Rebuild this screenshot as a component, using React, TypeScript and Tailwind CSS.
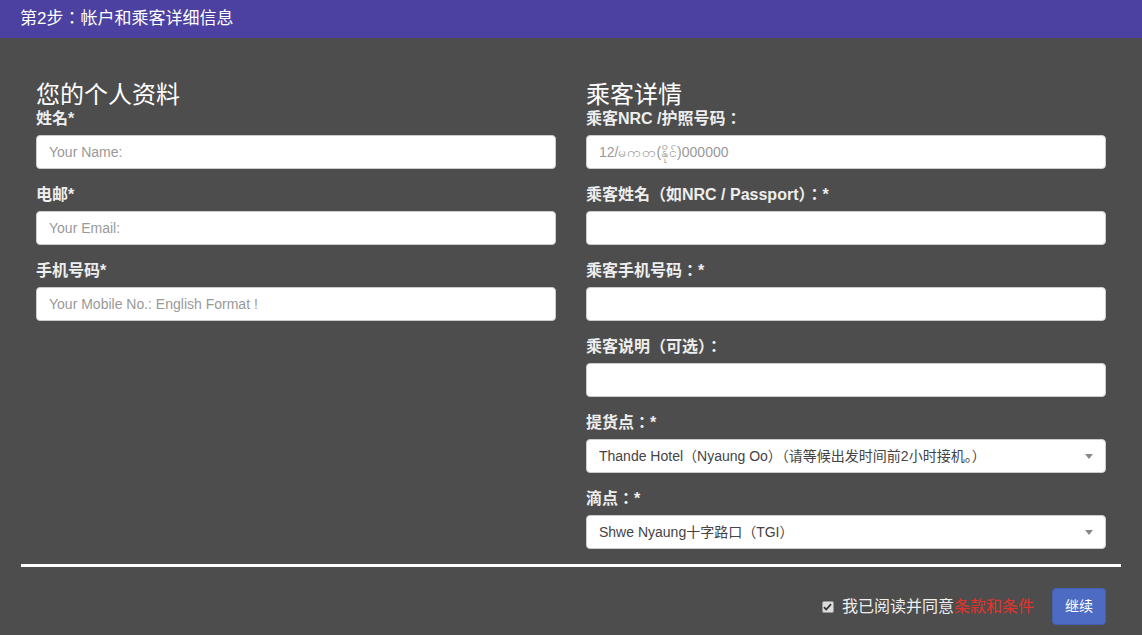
import React from "react";

const font = {
  fontFamily: '"Liberation Sans", Arial, "Noto Sans CJK TC", "Noto Sans CJK SC", sans-serif',
};

interface FieldProps {
  label: string;
  placeholder?: string;
}

const Field: React.FC<FieldProps> = ({ label, placeholder }) => (
  <div className="mb-[15px]">
    <label className="mb-[5px] block text-[16px] font-bold leading-[22px] text-[#eeeeee]">
      {label}
    </label>
    <input
      type="text"
      placeholder={placeholder}
      className="block h-[34px] w-full rounded-[4px] border border-[#cccccc] bg-white px-[12px] text-[14px] text-[#555] placeholder:text-[#999999] focus:outline-none"
    />
  </div>
);

interface SelectProps {
  label: string;
  value: string;
}

const SelectField: React.FC<SelectProps> = ({ label, value }) => (
  <div className="mb-[15px]">
    <label className="mb-[5px] block text-[16px] font-bold leading-[22px] text-[#eeeeee]">
      {label}
    </label>
    <div className="flex h-[34px] w-full items-center justify-between rounded-[4px] border border-[#cccccc] bg-white px-[12px] text-[14px] text-[#444444]">
      <span className="truncate font-['Liberation_Sans','Noto_Sans_CJK_SC',sans-serif]">
        {value}
      </span>
      <svg width="8" height="5" viewBox="0 0 8 5" className="shrink-0">
        <path d="M0 0h8L4 5z" fill="#888888" />
      </svg>
    </div>
  </div>
);

export default function App() {
  return (
    <div className="min-h-screen bg-[#4d4d4d]" style={font}>
      <div className="flex h-[38px] items-center bg-[#4c41a0] px-[20px]">
        <h2 className="text-[17px] text-white">第2步：帐户和乘客详细信息</h2>
      </div>

      <div className="mx-auto w-[1100px] pt-[44px]">
        <div className="grid grid-cols-2">
          <div className="px-[15px]">
            <h3 className="text-[24px] leading-[26px] text-white">您的个人资料</h3>
            <Field label="姓名*" placeholder="Your Name:" />
            <Field label="电邮*" placeholder="Your Email:" />
            <Field label="手机号码*" placeholder="Your Mobile No.: English Format !" />
          </div>

          <div className="px-[15px]">
            <h3 className="text-[24px] leading-[26px] text-white">乘客详情</h3>
            <Field label="乘客NRC /护照号码：" placeholder="12/မကတ(နိုင်)000000" />
            <Field label="乘客姓名（如NRC / Passport）：*" />
            <Field label="乘客手机号码：*" />
            <Field label="乘客说明（可选）：" />
            <SelectField
              label="提货点：*"
              value="Thande Hotel（Nyaung Oo）（请等候出发时间前2小时接机。）"
            />
            <SelectField label="滴点：*" value="Shwe Nyaung十字路口（TGI）" />
          </div>
        </div>

        <div className="h-[3px] bg-white" />

        <div className="flex items-center justify-end px-[15px] pt-[21px]">
          <div className="flex items-center">
            <span className="mr-[8px] flex h-[12px] w-[12px] items-center justify-center rounded-[2px] border border-[#999] bg-[#dddddd]">
              <svg width="9" height="8" viewBox="0 0 9 8">
                <path d="M1 4.2l2.2 2.3L8 1.2" stroke="#333" strokeWidth="1.8" fill="none" />
              </svg>
            </span>
            <span className="text-[16px] text-[#eeeeee]">
              我已阅读并同意<a className="text-[#e0342b]">条款和条件</a>
            </span>
          </div>
          <button className="ml-[18px] h-[37px] rounded-[4px] border border-[#4560b0] bg-[#4e6bc4] px-[12px] text-[14px] text-white">
            继续
          </button>
        </div>
      </div>
    </div>
  );
}
